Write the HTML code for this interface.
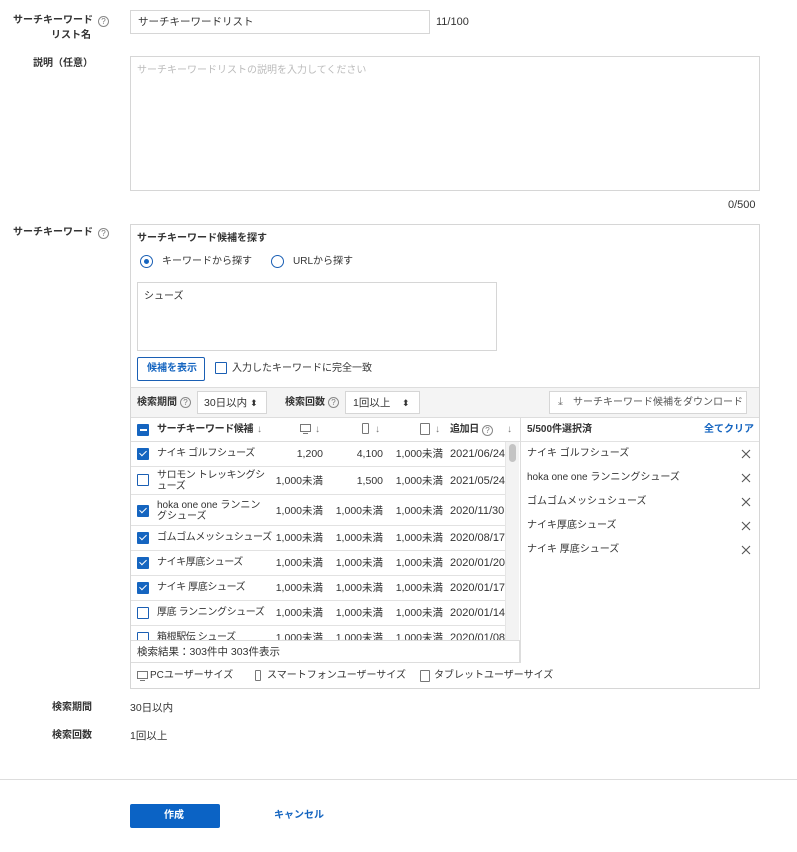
<!DOCTYPE html>
<html><head><meta charset="utf-8">
<style>
*{box-sizing:border-box;margin:0;padding:0}
body{width:797px;height:852px;background:#fff;position:relative;overflow:hidden;font-family:"Liberation Sans","Noto Sans CJK JP",sans-serif;font-size:10px;color:#333}
.a{position:absolute;white-space:nowrap;line-height:12px}
.q{position:absolute;width:11px;height:11px;border:1px solid #888;border-radius:50%;font-size:8px;line-height:9px;text-align:center;color:#777}
.box{position:absolute;border:1px solid #d6d6d6;background:#fff}
.cb{position:absolute;width:12px;height:12px;border:1.5px solid #1a5fb4;border-radius:1px;background:#fff}
.cb.on{background:#1565c0;border-color:#1565c0}
.cb.on:after{content:"";position:absolute;left:3px;top:0px;width:3px;height:6px;border:solid #fff;border-width:0 1.5px 1.5px 0;transform:rotate(45deg)}
.cb.m{background:#1565c0;border-color:#1565c0}
.tb{letter-spacing:-0.4px}
.row{position:absolute;left:0;width:375px;border-bottom:1px solid #e2e2e2}
.r{position:absolute;text-align:right;white-space:nowrap;line-height:12px;letter-spacing:0;font-size:10.5px}
.row .a+.r~.a,.dt{letter-spacing:0;font-size:11px}
.blue{color:#1565c0}
.x{position:absolute;left:741px;width:10px;height:10px}
.bd{font-weight:bold}
</style></head><body>

<div class="a bd" style="left:13px;top:15px;font-size:10px">サーチキーワード</div>
<div class="a bd" style="left:51px;top:30px;font-size:10px">リスト名</div>
<div class="q" style="left:98px;top:16px">?</div>
<div class="box" style="left:130px;top:10px;width:300px;height:24px"></div>
<div class="a" style="left:138px;top:16px;font-size:10.5px">サーチキーワードリスト</div>
<div class="a" style="left:436px;top:16px;font-size:11px">11/100</div>

<div class="a bd" style="left:33px;top:58px;font-size:10px">説明（任意）</div>
<div class="box" style="left:130px;top:56px;width:630px;height:135px"></div>
<div class="a" style="left:137px;top:65px;color:#bbb">サーチキーワードリストの説明を入力してください</div>
<div class="a" style="left:728px;top:199px;font-size:11px">0/500</div>

<div class="a bd" style="left:13px;top:227px;font-size:10px">サーチキーワード</div>
<div class="q" style="left:98px;top:228px">?</div>

<div class="box" style="left:130px;top:224px;width:630px;height:465px"></div>
<div class="a bd" style="left:137px;top:233px;font-size:10px">サーチキーワード候補を探す</div>
<div style="position:absolute;left:140px;top:255px;width:13px;height:13px;border:1.5px solid #1a5fb4;border-radius:50%"></div>
<div style="position:absolute;left:144px;top:259px;width:5px;height:5px;background:#1565c0;border-radius:50%"></div>
<div class="a" style="left:162px;top:256px">キーワードから探す</div>
<div style="position:absolute;left:271px;top:255px;width:13px;height:13px;border:1.5px solid #1a5fb4;border-radius:50%"></div>
<div class="a" style="left:293px;top:256px">URLから探す</div>
<div class="box" style="left:137px;top:282px;width:360px;height:69px"></div>
<div class="a" style="left:144px;top:291px">シューズ</div>
<div style="position:absolute;left:137px;top:357px;width:68px;height:24px;border:1px solid #1a5fb4;border-radius:2px"></div>
<div class="a blue bd" style="left:147px;top:363px;font-size:10px">候補を表示</div>
<div class="cb" style="left:215px;top:362px"></div>
<div class="a" style="left:232px;top:363px">入力したキーワードに完全一致</div>

<!-- toolbar -->
<div style="position:absolute;left:131px;top:387px;width:628px;height:31px;background:#f4f4f4;border-top:1px solid #ddd;border-bottom:1px solid #ddd"></div>
<div class="a bd" style="left:137px;top:397px;font-size:10px">検索期間</div>
<div class="q" style="left:180px;top:397px">?</div>
<div class="box" style="left:197px;top:391px;width:70px;height:23px"></div>
<div class="a" style="left:204px;top:397px;font-size:10.5px">30日以内 <span style="font-size:9px">⬍</span></div>
<div class="a bd" style="left:285px;top:397px;font-size:10px">検索回数</div>
<div class="q" style="left:328px;top:397px">?</div>
<div class="box" style="left:345px;top:391px;width:75px;height:23px"></div>
<div class="a" style="left:353px;top:397px;font-size:10.5px">1回以上</div>
<div class="a" style="left:402px;top:397px;font-size:9px">⬍</div>
<div class="box" style="left:549px;top:391px;width:198px;height:23px"></div>
<div class="a" style="left:558px;top:396px;color:#777;font-size:11px">⤓</div>
<div class="a" style="left:573px;top:397px;color:#555">サーチキーワード候補をダウンロード</div>

<!-- table header -->
<div style="position:absolute;left:131px;top:418px;width:389px;height:24px;border-bottom:1px solid #ddd"></div>
<div class="cb m" style="left:137px;top:424px"></div>
<div style="position:absolute;left:139.5px;top:429px;width:7px;height:1.5px;background:#fff"></div>
<div class="a bd tb" style="left:157px;top:424px;font-size:10px">サーチキーワード候補</div>
<div class="a" style="left:257px;top:424px;color:#777">↓</div>
<div style="position:absolute;left:300px;top:424px;width:11px;height:8px;border:1px solid #777"></div>
<div style="position:absolute;left:303px;top:433px;width:5px;height:1px;background:#777"></div>
<div class="a" style="left:315px;top:424px;color:#777">↓</div>
<div style="position:absolute;left:362px;top:423px;width:7px;height:11px;border:1px solid #777;border-radius:1px"></div>
<div class="a" style="left:375px;top:424px;color:#777">↓</div>
<div style="position:absolute;left:420px;top:423px;width:10px;height:12px;border:1px solid #777;border-radius:1px"></div>
<div class="a" style="left:435px;top:424px;color:#777">↓</div>
<div class="a bd tb" style="left:450px;top:424px;font-size:10px">追加日</div>
<div class="q" style="left:482px;top:425px">?</div>
<div class="a" style="left:507px;top:424px;color:#777">↓</div>

<!-- table body -->
<div class="tb" style="position:absolute;left:131px;top:442px;width:374px;height:198px;overflow:hidden">
 <div class="row" style="top:0;height:25px"><div class="cb on" style="left:6px;top:6px"></div><div class="a" style="left:26px;top:6px">ナイキ ゴルフシューズ</div><div class="r" style="right:183px;top:6px">1,200</div><div class="r" style="right:123px;top:6px">4,100</div><div class="r" style="right:63px;top:6px">1,000未満</div><div class="a dt" style="left:319px;top:6px">2021/06/24</div></div>
 <div class="row" style="top:25px;height:28px"><div class="cb" style="left:6px;top:7px"></div><div class="a" style="left:26px;top:3px;line-height:11px">サロモン トレッキングシ<br>ューズ</div><div class="r" style="right:183px;top:8px">1,000未満</div><div class="r" style="right:123px;top:8px">1,500</div><div class="r" style="right:63px;top:8px">1,000未満</div><div class="a dt" style="left:319px;top:8px">2021/05/24</div></div>
 <div class="row" style="top:53px;height:31px"><div class="cb on" style="left:6px;top:10px"></div><div class="a" style="left:26px;top:5px;line-height:11px;letter-spacing:0">hoka one one ランニン<br>グシューズ</div><div class="r" style="right:183px;top:10px">1,000未満</div><div class="r" style="right:123px;top:10px">1,000未満</div><div class="r" style="right:63px;top:10px">1,000未満</div><div class="a dt" style="left:319px;top:10px">2020/11/30</div></div>
 <div class="row" style="top:84px;height:25px"><div class="cb on" style="left:6px;top:6px"></div><div class="a" style="left:26px;top:6px">ゴムゴムメッシュシューズ</div><div class="r" style="right:183px;top:6px">1,000未満</div><div class="r" style="right:123px;top:6px">1,000未満</div><div class="r" style="right:63px;top:6px">1,000未満</div><div class="a dt" style="left:319px;top:6px">2020/08/17</div></div>
 <div class="row" style="top:109px;height:25px"><div class="cb on" style="left:6px;top:6px"></div><div class="a" style="left:26px;top:6px">ナイキ厚底シューズ</div><div class="r" style="right:183px;top:6px">1,000未満</div><div class="r" style="right:123px;top:6px">1,000未満</div><div class="r" style="right:63px;top:6px">1,000未満</div><div class="a dt" style="left:319px;top:6px">2020/01/20</div></div>
 <div class="row" style="top:134px;height:25px"><div class="cb on" style="left:6px;top:6px"></div><div class="a" style="left:26px;top:6px">ナイキ 厚底シューズ</div><div class="r" style="right:183px;top:6px">1,000未満</div><div class="r" style="right:123px;top:6px">1,000未満</div><div class="r" style="right:63px;top:6px">1,000未満</div><div class="a dt" style="left:319px;top:6px">2020/01/17</div></div>
 <div class="row" style="top:159px;height:25px"><div class="cb" style="left:6px;top:6px"></div><div class="a" style="left:26px;top:6px">厚底 ランニングシューズ</div><div class="r" style="right:183px;top:6px">1,000未満</div><div class="r" style="right:123px;top:6px">1,000未満</div><div class="r" style="right:63px;top:6px">1,000未満</div><div class="a dt" style="left:319px;top:6px">2020/01/14</div></div>
 <div class="row" style="top:184px;height:25px;border:none"><div class="cb" style="left:6px;top:6px"></div><div class="a" style="left:26px;top:6px">箱根駅伝 シューズ</div><div class="r" style="right:183px;top:6px">1,000未満</div><div class="r" style="right:123px;top:6px">1,000未満</div><div class="r" style="right:63px;top:6px">1,000未満</div><div class="a dt" style="left:319px;top:6px">2020/01/08</div></div>
</div>
<div style="position:absolute;left:505px;top:442px;width:14px;height:198px;background:#f3f3f3;border-left:1px solid #e6e6e6"></div>
<div style="position:absolute;left:509px;top:444px;width:7px;height:18px;background:#c4c4c4;border-radius:4px"></div>

<!-- footer -->
<div style="position:absolute;left:131px;top:640px;width:389px;height:23px;border-top:1px solid #ddd;border-bottom:1px solid #ddd;border-right:1px solid #ddd;background:#fff"></div>
<div class="a" style="left:137px;top:646px;font-size:10.5px">検索結果：303件中 303件表示</div>

<!-- right panel -->
<div style="position:absolute;left:520px;top:418px;width:1px;height:245px;background:#ddd"></div>
<div style="position:absolute;left:521px;top:441px;width:238px;height:1px;background:#e2e2e2"></div>
<div class="a bd" style="left:527px;top:424px;font-size:10px">5/500件選択済</div>
<div class="a blue bd" style="left:704px;top:424px;font-size:10px">全てクリア</div>
<div class="a" style="left:527px;top:448px">ナイキ ゴルフシューズ</div>
<div class="a" style="left:527px;top:472px">hoka one one ランニングシューズ</div>
<div class="a" style="left:527px;top:496px">ゴムゴムメッシュシューズ</div>
<div class="a" style="left:527px;top:520px">ナイキ厚底シューズ</div>
<div class="a" style="left:527px;top:544px">ナイキ 厚底シューズ</div>
<svg class="x" style="top:449px" viewBox="0 0 10 10"><path d="M1 1L9 9M9 1L1 9" stroke="#555" stroke-width="1.1"/></svg>
<svg class="x" style="top:473px" viewBox="0 0 10 10"><path d="M1 1L9 9M9 1L1 9" stroke="#555" stroke-width="1.1"/></svg>
<svg class="x" style="top:497px" viewBox="0 0 10 10"><path d="M1 1L9 9M9 1L1 9" stroke="#555" stroke-width="1.1"/></svg>
<svg class="x" style="top:521px" viewBox="0 0 10 10"><path d="M1 1L9 9M9 1L1 9" stroke="#555" stroke-width="1.1"/></svg>
<svg class="x" style="top:545px" viewBox="0 0 10 10"><path d="M1 1L9 9M9 1L1 9" stroke="#555" stroke-width="1.1"/></svg>

<!-- legend -->
<div style="position:absolute;left:137px;top:671px;width:11px;height:8px;border:1px solid #777"></div>
<div style="position:absolute;left:140px;top:680px;width:5px;height:1px;background:#777"></div>
<div class="a" style="left:150px;top:670px">PCユーザーサイズ</div>
<div style="position:absolute;left:255px;top:670px;width:6px;height:11px;border:1px solid #777;border-radius:1px"></div>
<div class="a" style="left:267px;top:670px">スマートフォンユーザーサイズ</div>
<div style="position:absolute;left:420px;top:670px;width:10px;height:12px;border:1px solid #777;border-radius:1px"></div>
<div class="a" style="left:434px;top:670px">タブレットユーザーサイズ</div>

<div class="a bd" style="left:52px;top:702px;font-size:10px">検索期間</div>
<div class="a" style="left:130px;top:702px;font-size:10.5px">30日以内</div>
<div class="a bd" style="left:52px;top:730px;font-size:10px">検索回数</div>
<div class="a" style="left:130px;top:730px;font-size:10.5px">1回以上</div>

<div style="position:absolute;left:0;top:779px;width:797px;height:1px;background:#ddd"></div>
<div style="position:absolute;left:130px;top:804px;width:90px;height:24px;background:#0b63c5;border-radius:2px"></div>
<div class="a bd" style="left:164px;top:810px;color:#fff;font-size:10px">作成</div>
<div class="a blue bd" style="left:274px;top:810px;font-size:10px">キャンセル</div>
</body></html>
